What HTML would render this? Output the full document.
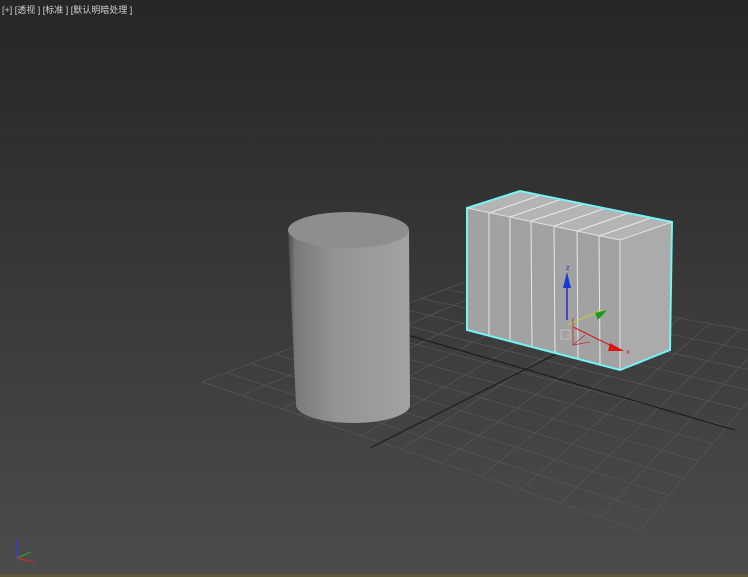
<!DOCTYPE html>
<html><head><meta charset="utf-8"><style>
html,body{margin:0;padding:0;width:748px;height:577px;overflow:hidden;background:#333}
.t{position:absolute;left:2px;top:3px;font:9px "Liberation Sans","Noto Sans CJK SC",sans-serif;color:#d0d0d0;white-space:nowrap}
</style></head><body>
<svg id="s" width="748" height="577" style="position:absolute;left:0;top:0">
<defs>
<linearGradient id="bg" x1="0" y1="0" x2="0" y2="1"><stop offset="0" stop-color="#262626"/><stop offset="1" stop-color="#4c4c4c"/></linearGradient>
<linearGradient id="cyl" x1="0" y1="0" x2="1" y2="0"><stop offset="0" stop-color="#4a4a4a"/><stop offset="0.06" stop-color="#7a7a7a"/><stop offset="0.4" stop-color="#949494"/><stop offset="1" stop-color="#a2a2a2"/></linearGradient>
</defs>
<rect width="748" height="577" fill="url(#bg)"/>
<g id="grid" stroke="#575757" stroke-width="0.7" fill="none"></g>
<line x1="370" y1="448" x2="560" y2="352" stroke="#1e1e1e" stroke-width="1.2"/>
<line x1="397" y1="332" x2="735" y2="430" stroke="#1e1e1e" stroke-width="1.2"/>
<path d="M288,230 L296,405 A57,18 0 0 0 410,405 L409,230 Z" fill="url(#cyl)"/>
<ellipse cx="348.5" cy="230" rx="60.5" ry="18" fill="#8e8e8e"/>
<polygon points="467,208 620,240 620,370 467,330" fill="#a2a2a2"/>
<polygon points="467,208 520,191 672,222 620,240" fill="#b4b4b4"/>
<polygon points="620,240 672,222 670,350 620,370" fill="#ababab"/>
<g stroke="#e8e8e8" stroke-width="1">
<line x1="489" y1="213" x2="489" y2="336"/><line x1="510" y1="217" x2="510" y2="341"/>
<line x1="531" y1="221" x2="532" y2="347"/><line x1="554" y1="226" x2="555" y2="353"/>
<line x1="577" y1="231" x2="578" y2="358"/><line x1="599" y1="236" x2="600" y2="364"/>
<line x1="489" y1="213" x2="541" y2="195"/><line x1="510" y1="217" x2="562" y2="199"/>
<line x1="531" y1="221" x2="583" y2="204"/><line x1="554" y1="226" x2="606" y2="208"/>
<line x1="577" y1="231" x2="629" y2="213"/><line x1="599" y1="236" x2="651" y2="218"/>
</g>
<polygon points="467,208 520,191 672,222 670,350 620,370 467,330" fill="none" stroke="#74f4f4" stroke-width="2"/>
<line x1="467" y1="208" x2="620" y2="240" stroke="#e0e0e0" stroke-width="1"/>
<line x1="620" y1="240" x2="672" y2="222" stroke="#e0e0e0" stroke-width="1"/>
<line x1="620" y1="240" x2="620" y2="370" stroke="#e0e0e0" stroke-width="1"/>
<line x1="567" y1="320" x2="567" y2="280" stroke="#2a2ad0" stroke-width="1.5"/>
<polygon points="567,272 563,288 571,288" fill="#1a3ad8"/>
<text x="566" y="270" font-size="7" fill="#2a2ad0" font-family="Liberation Sans">z</text>
<line x1="567" y1="325" x2="603" y2="310" stroke="#c8c840" stroke-width="1.2"/>
<polygon points="607,310 595,313 598,320" fill="#1a9a1a"/>
<line x1="573" y1="327" x2="620" y2="350" stroke="#d02020" stroke-width="1.2"/>
<polygon points="624,351 610,343 608,351" fill="#e01010"/>
<text x="626" y="354" font-size="7" fill="#d02020" font-family="Liberation Sans">x</text>
<rect x="561" y="330" width="9" height="9" fill="none" stroke="#c8c8c8" stroke-width="0.8"/>
<path d="M573,318 L573,345 L590,342 M573,345 L585,335" stroke="#c03030" fill="none" stroke-width="0.8"/>
<line x1="17" y1="539" x2="17" y2="558" stroke="#3a3ad0" stroke-width="1.5"/>
<line x1="17" y1="558" x2="31" y2="552" stroke="#30a030" stroke-width="1.2"/>
<line x1="17" y1="558" x2="34" y2="562" stroke="#c03030" stroke-width="1.2"/>
<rect x="0" y="574" width="748" height="3" fill="#5e5838"/>
</svg>
<div class="t">[+] [透视 ] [标准 ] [默认明暗处理 ]</div>
<script>
(function(){
var g=document.getElementById('grid');
var B=[470,280],R=[800,340],F=[640,530],L=[202,382];
var n=11,s='';
function p(u,v){return [(1-u)*(1-v)*B[0]+u*(1-v)*R[0]+u*v*F[0]+(1-u)*v*L[0],(1-u)*(1-v)*B[1]+u*(1-v)*R[1]+u*v*F[1]+(1-u)*v*L[1]];}
function ln(a,b){return '<line x1="'+a[0].toFixed(1)+'" y1="'+a[1].toFixed(1)+'" x2="'+b[0].toFixed(1)+'" y2="'+b[1].toFixed(1)+'"/>';}
for(var i=0;i<=n;i++){var t=i/n;s+=ln(p(t,0),p(t,1))+ln(p(0,t),p(1,t));}
g.innerHTML=s;
})();
</script>
</body></html>
